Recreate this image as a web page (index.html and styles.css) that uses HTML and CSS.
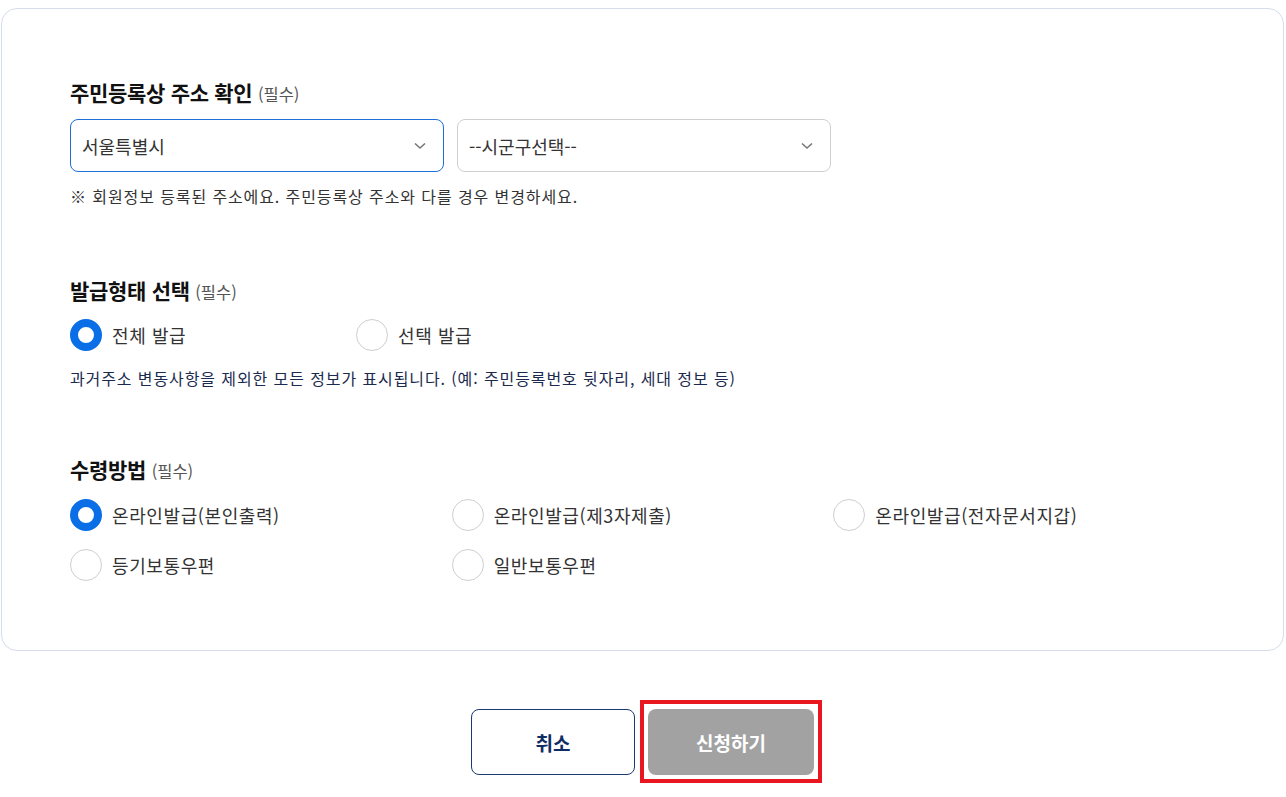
FILE: index.html
```html
<!DOCTYPE html>
<html lang="ko">
<head>
<meta charset="utf-8">
<title>신청</title>
<link rel="stylesheet" href="styles.css">
</head>
<body>
<div class="page">
  <div class="card">
    <section class="section">
      <h2 class="title">주민등록상 주소 확인 <span class="req">(필수)</span></h2>
      <div class="selects">
        <div class="select active"><span>서울특별시</span>
          <svg class="chev" width="12" height="8" viewBox="0 0 12 8"><path d="M1 1.5 L6 6 L11 1.5" fill="none" stroke="#777" stroke-width="1.6"/></svg>
        </div>
        <div class="select"><span>--시군구선택--</span>
          <svg class="chev" width="12" height="8" viewBox="0 0 12 8"><path d="M1 1.5 L6 6 L11 1.5" fill="none" stroke="#777" stroke-width="1.6"/></svg>
        </div>
      </div>
      <p class="note">※ 회원정보 등록된 주소에요. 주민등록상 주소와 다를 경우 변경하세요.</p>
    </section>

    <section class="section s2">
      <h2 class="title">발급형태 선택 <span class="req">(필수)</span></h2>
      <div class="radios two">
        <label class="radio"><span class="dot on"></span>전체 발급</label>
        <label class="radio"><span class="dot"></span>선택 발급</label>
      </div>
      <p class="desc">과거주소 변동사항을 제외한 모든 정보가 표시됩니다. (예: 주민등록번호 뒷자리, 세대 정보 등)</p>
    </section>

    <section class="section s3">
      <h2 class="title">수령방법 <span class="req">(필수)</span></h2>
      <div class="radios three">
        <label class="radio"><span class="dot on"></span>온라인발급(본인출력)</label>
        <label class="radio"><span class="dot"></span>온라인발급(제3자제출)</label>
        <label class="radio"><span class="dot"></span>온라인발급(전자문서지갑)</label>
        <label class="radio"><span class="dot"></span>등기보통우편</label>
        <label class="radio"><span class="dot"></span>일반보통우편</label>
      </div>
    </section>
  </div>

  <div class="actions">
    <button class="btn cancel">취소</button>
    <span class="highlight"><button class="btn submit">신청하기</button></span>
  </div>
</div>
</body>
</html>
```

FILE: styles.css
```css
* { box-sizing: border-box; }
html, body { margin: 0; padding: 0; background: #fff; }
body {
  font-family: "Noto Sans CJK KR", "Noto Sans", sans-serif;
  color: #222;
}
.page { padding: 8px 2px 22px 1px; }
.card {
  border: 1px solid #d5dcea;
  border-radius: 16px;
  padding: 69px 68px 69px 68px;
  background: #fff;
}
.section + .section { margin-top: 69px; }
.section.s3 { margin-top: 66px; }
.title {
  margin: 0;
  height: 28px;
  font-size: 21px;
  font-weight: 700;
  line-height: 28px;
  color: #111;
  letter-spacing: -0.3px;
  white-space: nowrap;
}
.req {
  font-size: 16.5px;
  line-height: 28px;
  font-weight: 400;
  color: #555;
  letter-spacing: 0;
}
.selects {
  display: flex;
  gap: 13px;
  margin-top: 13px;
}
.select {
  width: 374px;
  height: 53px;
  border: 1px solid #cfcfcf;
  border-radius: 8px;
  display: flex;
  align-items: center;
  justify-content: space-between;
  padding: 0 17px 0 11px;
  font-size: 18px;
  color: #333;
  letter-spacing: 0;
}
.select.active { border-color: #1f6fd8; }
.chev { display: block; }
.note {
  margin: 13px 0 0;
  height: 22px;
  font-size: 16px;
  line-height: 22px;
  color: #333;
  letter-spacing: 0.9px;
  white-space: nowrap;
}
.radios { margin-top: 15px; display: grid; }
.radios.two { grid-template-columns: 286px 286px; }
.radios.three { grid-template-columns: repeat(3, 1fr); row-gap: 18px; margin-top: 16px; }
.radio {
  display: flex;
  align-items: center;
  gap: 10px;
  font-size: 18px;
  line-height: 32px;
  color: #333;
  letter-spacing: 0.6px;
  height: 32px;
  white-space: nowrap;
}
.dot {
  width: 32px;
  height: 32px;
  border-radius: 50%;
  border: 1px solid #cfcfcf;
  background: #fff;
  flex: none;
}
.dot.on { border: 8px solid #0a6ee6; }
.desc {
  margin: 16px 0 0;
  height: 22px;
  font-size: 16px;
  line-height: 22px;
  color: #1b2a4e;
  letter-spacing: 0.9px;
  white-space: nowrap;
}
.actions {
  display: flex;
  justify-content: center;
  gap: 13px;
  margin-top: 58px;
}
.btn {
  display: block;
  width: 164px;
  height: 66px;
  border-radius: 8px;
  font-family: inherit;
  font-size: 19px;
  font-weight: 700;
  letter-spacing: 0;
}
.cancel { background: #fff; border: 1px solid #1b3a73; color: #0f2c63; }
.highlight { position: relative; display: block; }
.highlight::after {
  content: "";
  position: absolute;
  top: -9px;
  left: -8px;
  right: -8px;
  bottom: -8px;
  border: 4px solid #e8161f;
  pointer-events: none;
}
.submit {
  background: #a2a2a2;
  border: none;
  color: #fff;
  width: 166px;
}
```
